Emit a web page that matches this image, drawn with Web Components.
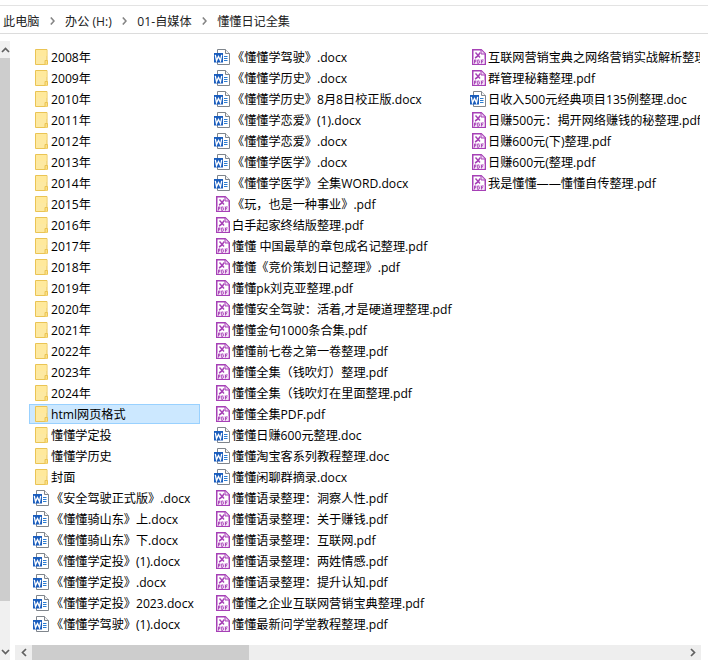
<!DOCTYPE html>
<html><head><meta charset="utf-8"><style>
html,body{margin:0;padding:0;background:#fff;overflow:hidden}
body{width:708px;height:660px;font:12.15px "Open Sans","Noto Sans CJK SC",sans-serif;color:#000}
</style></head><body>
<explorer-window></explorer-window>
<template id="ico-folder"><svg width="13" height="16" viewBox="0 0 13 16"><path d="M.5.5h11.500v15H.5z" fill="#fde9a2" stroke="#eac454"/><path d="M1 1h10.500v6H1z" fill="#ffe99c"/><path d="M10 15.500v-4h2.500v4" fill="#fbdf85" stroke="#eac454"/></svg></template>
<template id="ico-word"><svg width="16" height="16" viewBox="0 0 16 16"><path d="M3.500.5h8l4 4v11h-12z" fill="#fff" stroke="#7f858c"/><path d="M11.500.5v4h4" fill="#f3f3f3" stroke="#7f858c"/><path d="M10 7.500h3.500M10 9.500h3.500M10 11.500h3.500" stroke="#2b7bd0"/><rect x="0" y="4" width="9" height="9.500" fill="#1a5dbd"/><path d="M1.300 5.800l1.200 5.800 2-4.200 2 4.200 1.200-5.800" fill="none" stroke="#fff" stroke-width="1.300"/></svg></template>
<template id="ico-pdf"><svg width="14" height="16" viewBox="0 0 14 16"><path d="M.75.75h8.500l4 4v10.500H.75z" fill="#fff" stroke="#a640b6" stroke-width="1.500"/><path d="M9 1v4h4" fill="#f0d8f4" stroke="#a640b6"/><path d="M3.500 3.500l4.500 5M8 3.500C7 6 5.500 8 3 9" fill="none" stroke="#a640b6" stroke-width="1.400"/><rect x="1.500" y="10" width="11" height="5" fill="#f3e0f6"/><path d="M2.500 14.500v-3.500h1.300v1.700H2.500M5.700 11v3.500h.8q1-.4 1-1.700T6.500 11zM9.500 14.500V11h2M9.500 12.700h1.500" fill="none" stroke="#a640b6" stroke-width=".9"/></svg></template>
<script>
class BreadCrumb extends HTMLElement{constructor(){super();this.attachShadow({mode:'open'}).innerHTML=`<style>
:host{display:flex;align-items:center;height:25px;padding-top:2px;border-top:1px solid #e3e3e3;border-bottom:1px solid #dcdcdc;margin-top:5px;margin-bottom:1px;padding-left:3px;color:#222;font-size:12.15px;gap:10.300px}
svg{display:block;flex:none}
</style>`+this.dataset.parts.split('|').map((p,i)=>(i?'<svg width="5" height="8" viewBox="0 0 5 8"><path d="M.8.5L4 4 .8 7.500" fill="none" stroke="#858585" stroke-width="1.600"/></svg>':'')+`<span>${p}</span>`).join('')}}
customElements.define('bread-crumb',BreadCrumb);
class FileItem extends HTMLElement{constructor(){super();const t=this.dataset.type;const root=this.attachShadow({mode:'open'});
root.innerHTML=`<style>
:host{display:flex;align-items:center;height:20px;box-sizing:border-box;white-space:nowrap;overflow:hidden;border:1px solid transparent;color:#000}
:host([data-selected]){background:#cce8ff;border-color:#99d1ff}
.i{flex:none;display:flex;margin-left:3px}
.folder{width:13px;margin-left:5px;margin-right:3px}
.word{width:16px;margin-right:2px}
.pdf{width:14px;margin-left:5px;margin-right:2px}
svg{display:block}
</style><span class="i ${t}"></span><slot></slot>`;
root.querySelector('.i').append(document.getElementById('ico-'+t).content.cloneNode(true));}}
customElements.define('file-item',FileItem);
class FileList extends HTMLElement{constructor(){super();this.attachShadow({mode:'open'}).innerHTML=`<style>
:host{display:block}
.c{display:grid;grid-auto-flow:column;grid-template-rows:repeat(28,21px);grid-template-columns:171px 246px 235px;column-gap:10px}
</style><div class="c"><slot></slot></div>`}}
customElements.define('file-list',FileList);
const cols=[
['f:2008年','f:2009年','f:2010年','f:2011年','f:2012年','f:2013年','f:2014年','f:2015年','f:2016年','f:2017年','f:2018年','f:2019年','f:2020年','f:2021年','f:2022年','f:2023年','f:2024年','s:html网页格式','f:懂懂学定投','f:懂懂学历史','f:封面','w:《安全驾驶正式版》.docx','w:《懂懂骑山东》上.docx','w:《懂懂骑山东》下.docx','w:《懂懂学定投》(1).docx','w:《懂懂学定投》.docx','w:《懂懂学定投》2023.docx','w:《懂懂学驾驶》(1).docx'],
['w:《懂懂学驾驶》.docx','w:《懂懂学历史》.docx','w:《懂懂学历史》8月8日校正版.docx','w:《懂懂学恋爱》(1).docx','w:《懂懂学恋爱》.docx','w:《懂懂学医学》.docx','w:《懂懂学医学》全集WORD.docx','p:《玩，也是一种事业》.pdf','p:白手起家终结版整理.pdf','p:懂懂 中国最草的章包成名记整理.pdf','p:懂懂《竞价策划日记整理》.pdf','p:懂懂pk刘克亚整理.pdf','p:懂懂安全驾驶：活着,才是硬道理整理.pdf','p:懂懂金句1000条合集.pdf','p:懂懂前七卷之第一卷整理.pdf','p:懂懂全集（钱吹灯）整理.pdf','p:懂懂全集（钱吹灯在里面整理.pdf','p:懂懂全集PDF.pdf','w:懂懂日赚600元整理.doc','w:懂懂淘宝客系列教程整理.doc','w:懂懂闲聊群摘录.docx','p:懂懂语录整理：洞察人性.pdf','p:懂懂语录整理：关于赚钱.pdf','p:懂懂语录整理：互联网.pdf','p:懂懂语录整理：两姓情感.pdf','p:懂懂语录整理：提升认知.pdf','p:懂懂之企业互联网营销宝典整理.pdf','p:懂懂最新问学堂教程整理.pdf'],
['p:互联网营销宝典之网络营销实战解析整理','p:群管理秘籍整理.pdf','w:日收入500元经典项目135例整理.doc','p:日赚500元：揭开网络赚钱的秘整理.pdf','p:日赚600元(下)整理.pdf','p:日赚600元(整理.pdf','p:我是懂懂——懂懂自传整理.pdf']];
const T={f:'folder',s:'folder',w:'word',p:'pdf'};
class ExplorerWindow extends HTMLElement{constructor(){super();const r=this.attachShadow({mode:'open'});
let items='';cols.forEach(c=>{c.forEach(e=>{const k=e[0],n=e.slice(2);items+=`<file-item data-type="${T[k]}"${k=='s'?' data-selected':''}>${n}</file-item>`});for(let i=c.length;i<28;i++)items+='<span></span>'});
r.innerHTML=`<style>
:host{display:flex;flex-direction:column;width:708px;height:660px;overflow:hidden;background:#fff}
.main{flex:1;display:flex;min-height:0;margin-top:6px}
.vs{width:10px;background:#f0f0f0;display:flex;flex-direction:column;flex:none}
.vs .b{height:17px;display:flex;align-items:center;justify-content:center;flex:none}
.vs .t{height:543px;background:#cdcdcd;flex:none}
.vs .s{flex:1}
.body{flex:1;min-width:0;display:flex;flex-direction:column}
.files{flex:1;min-height:0;padding:6px 0 0 19px;overflow:hidden}
.hs{height:15px;display:flex;margin-left:5px;margin-right:7px;background:#eee;flex:none}
.hs .b{width:17px;display:flex;align-items:center;justify-content:center;flex:none}
.hs .t{width:217px;background:#cdcdcd;flex:none}
.hs .s{flex:1}
</style>
<bread-crumb data-parts="此电脑|办公 (H:)|01-自媒体|懂懂日记全集"></bread-crumb>
<div class="main"><div class="vs"><div class="b"><svg width="9" height="6" viewBox="0 0 9 6"><path d="M1 5l3.500-3.500L8 5" fill="none" stroke="#606060" stroke-width="1.700"/></svg></div><div class="t"></div><div class="s"></div><div class="b"><svg width="9" height="6" viewBox="0 0 9 6"><path d="M1 1l3.500 3.500L8 1" fill="none" stroke="#606060" stroke-width="1.700"/></svg></div></div>
<div class="body"><div class="files"><file-list>${items}</file-list></div>
<div class="hs"><div class="b"><svg width="6" height="9" viewBox="0 0 6 9"><path d="M5 1L1.500 4.500 5 8" fill="none" stroke="#606060" stroke-width="1.700"/></svg></div><div class="t"></div><div class="s"></div><div class="b"><svg width="6" height="9" viewBox="0 0 6 9"><path d="M1 1l3.500 3.500L1 8" fill="none" stroke="#606060" stroke-width="1.700"/></svg></div></div></div></div>`;}}
customElements.define('explorer-window',ExplorerWindow);
</script></body></html>
